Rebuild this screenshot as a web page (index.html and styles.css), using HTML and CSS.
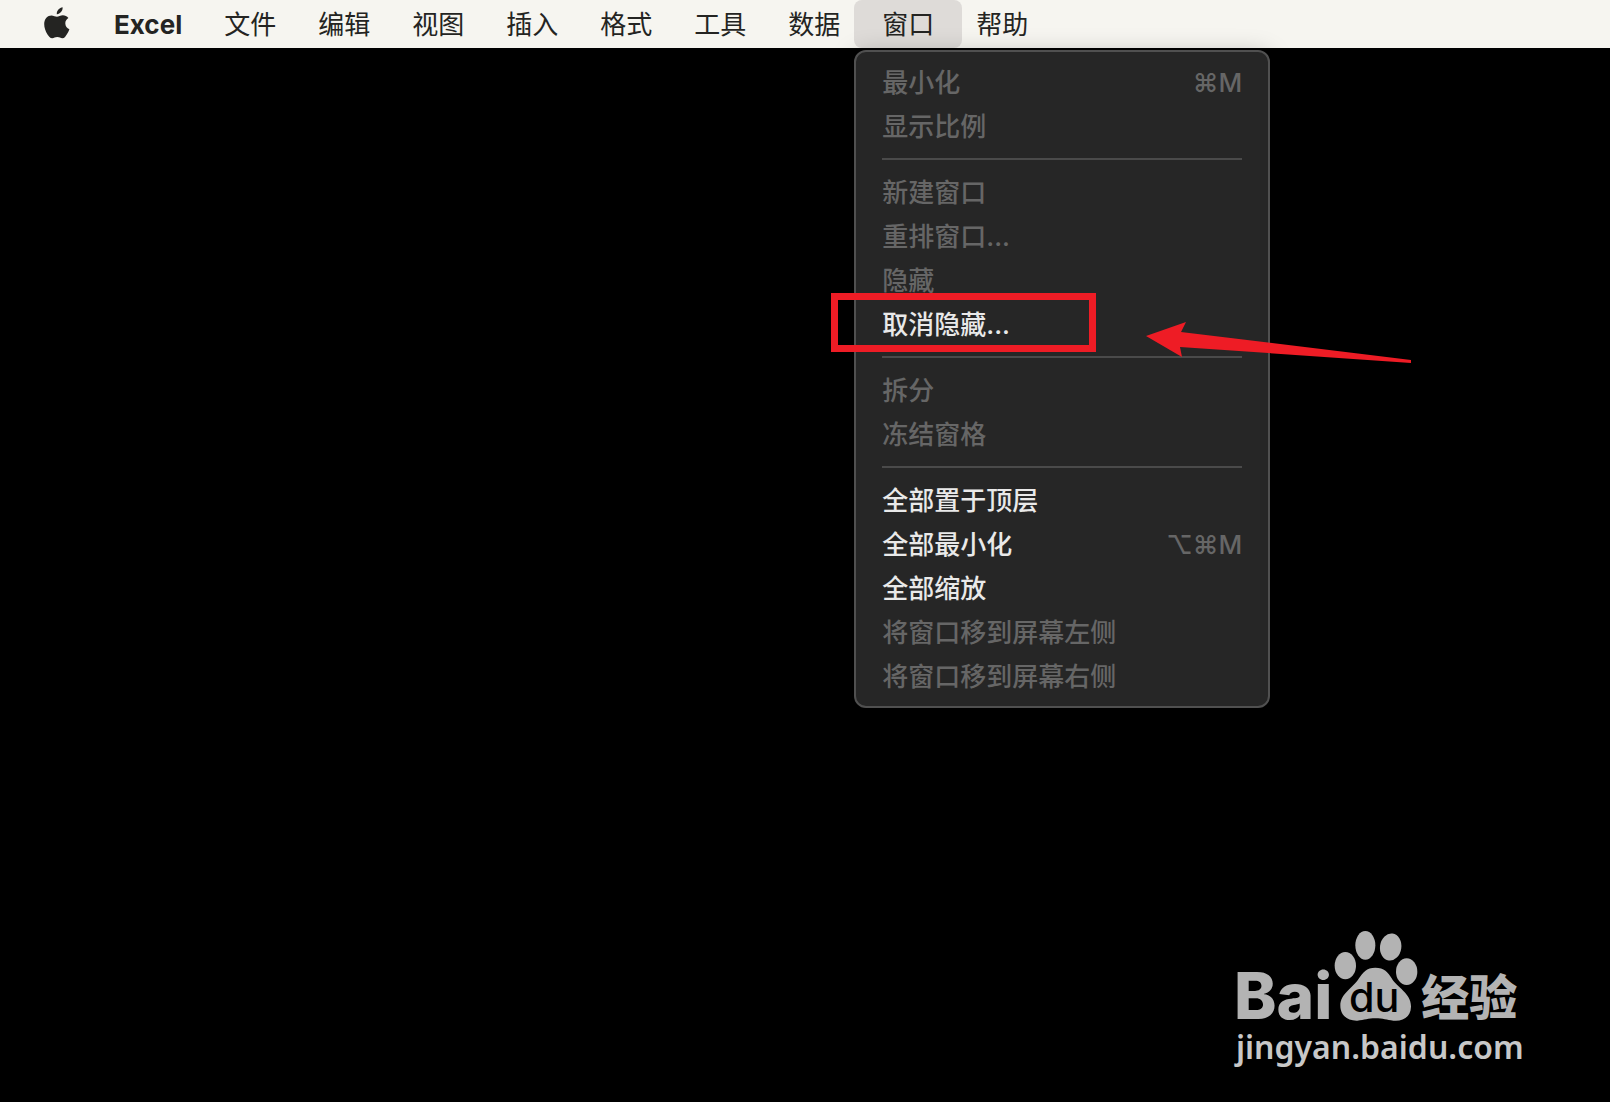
FILE: index.html
```html
<!DOCTYPE html>
<html lang="zh-CN">
<head>
    <meta charset="utf-8">
    <title>Excel</title>
    <link rel="stylesheet" href="styles.css">
</head>
<body>
    <nav class="menubar">
        <button class="bar-item apple" type="button" aria-label="Apple">
            <svg width="26" height="32" viewBox="0 0 26 32">
                <path d="M18.6 0.2C18.8 2 18.1 3.8 17 5.1C15.9 6.4 14.3 7.3 12.8 7.2C12.6 5.5 13.4 3.7 14.4 2.6C15.5 1.3 17.2 0.3 18.6 0.2Z"/>
                <path d="M24.4 11C22.6 12.1 21.3 13.9 21.3 16.3C21.3 19.1 22.9 21.3 25.4 22.2C24.9 23.9 24 25.6 22.9 27.2C21.8 28.9 20.6 31.2 18.3 31.3C16.5 31.3 15.7 30.1 13.3 30.1C10.9 30.1 10.1 31.3 8.3 31.3C6.2 31.4 4.7 29.1 3.5 27.4C1.4 24.3 0.2 20.6 0.2 17.1C0.2 11.5 3.7 8.4 7.4 8.4C9.5 8.4 11.4 9.7 13 9.7C14.4 9.7 16.6 8.3 18.9 8.3C20.9 8.3 23 9.2 24.4 11Z"/>
            </svg>
        </button>
        <button class="bar-item app-name" type="button">Excel</button>
        <button class="bar-item" type="button">文件</button>
        <button class="bar-item" type="button">编辑</button>
        <button class="bar-item" type="button">视图</button>
        <button class="bar-item" type="button">插入</button>
        <button class="bar-item" type="button">格式</button>
        <button class="bar-item" type="button">工具</button>
        <button class="bar-item" type="button">数据</button>
        <div class="bar-group">
            <button class="bar-item active" type="button" aria-expanded="true">窗口</button>
            <div class="menu">
                <button type="button" disabled>最小化<kbd>⌘M</kbd></button>
                <button type="button" disabled>显示比例</button>
                <hr>
                <button type="button" disabled>新建窗口</button>
                <button type="button" disabled>重排窗口...</button>
                <button type="button" disabled>隐藏</button>
                <button class="marked" type="button">取消隐藏...</button>
                <hr>
                <button type="button" disabled>拆分</button>
                <button type="button" disabled>冻结窗格</button>
                <hr>
                <button type="button">全部置于顶层</button>
                <button type="button">全部最小化<kbd>⌥⌘M</kbd></button>
                <button type="button">全部缩放</button>
                <button type="button" disabled>将窗口移到屏幕左侧</button>
                <button type="button" disabled>将窗口移到屏幕右侧</button>
                <!-- 红色箭头 -->
                <svg class="arrow" width="266" height="42" viewBox="0 0 266 42">
                    <path d="M0 14L40 0L35 10L265 38V41L34 25L36 35Z"/>
                </svg>
            </div>
        </div>
        <button class="bar-item" type="button">帮助</button>
    </nav>

    <footer class="watermark">
        <svg class="logo" width="288" height="94" viewBox="48 60 864 282">
            <ellipse cx="376" cy="167" rx="32" ry="41"/>
            <ellipse cx="436" cy="106" rx="30" ry="43"/>
            <ellipse cx="512" cy="111" rx="32" ry="41" transform="rotate(8 512 111)"/>
            <ellipse cx="560" cy="185" rx="32" ry="40"/>
            <path d="M466 173C492 173 505 187 515 205C530 232 574 250 573 290C572 322 548 335 520 332C500 330 490 325 466 325C444 325 434 330 412 332C382 333 361 315 361 287C361 252 397 235 415 208C428 187 440 173 466 173Z"/>
            <text class="logo-bai" x="42" y="327">Bai</text>
            <text class="logo-du" x="387" y="307">du</text>
            <text class="logo-cn" x="604" y="316">经验</text>
        </svg>
        <span class="site">jingyan.baidu.com</span>
    </footer>
</body>
</html>
```
FILE: styles.css
```css
body {
    margin: 0;
    min-height: 100vh;
    background-color: #000;
    font-family: Inter, "Noto Sans CJK SC", sans-serif;
    font-size: 26px;
}

button {
    border: none;
    background: none;
    font: inherit;
    color: inherit;
}

/* ================= 顶部菜单栏 ================= */
.menubar {
    display: flex;
    height: 48px;
    padding-left: 23px;
    background-color: #f6f5f0;
    color: #242422;
}

.bar-item {
    height: 48px;
    padding: 1px 21px 0;
    line-height: 48px;
    white-space: nowrap;
}

.apple {
    display: flex;
    align-items: center;
    padding-right: 23px;
}

.apple svg {
    margin-bottom: 4px;
    fill: #242422;
}

.app-name {
    font-weight: 700;
}

.bar-group {
    position: relative;
    margin: 0 -7px;
}

.bar-item.active {
    padding: 1px 28px 0;
    border-radius: 8px;
    background-color: #dedbd8;
}

/* ================= 下拉菜单 ================= */
.menu {
    position: absolute;
    top: 50px;
    left: 0;
    box-sizing: border-box;
    width: 416px;
    padding: 8px 0;
    border: 2px solid #505050;
    border-radius: 12px;
    background-color: #262626;
    box-shadow: 0 4px 24px rgba(0, 0, 0, 0.25);
    color: #e9e9e9;
    font-weight: 500;
}

.menu button {
    display: flex;
    justify-content: space-between;
    align-items: center;
    width: 100%;
    height: 44px;
    padding: 2px 26px 0;
    line-height: 42px;
    text-align: left;
}

.menu button:disabled,
.menu kbd {
    color: #666;
}

.menu kbd {
    font: inherit;
}

.menu hr {
    height: 2px;
    margin: 10px 26px;
    border: none;
    background-color: #4a4a4a;
}

/* 红框标注 */
.marked {
    position: relative;
}

.marked::after {
    content: "";
    position: absolute;
    top: -9px;
    left: -25px;
    width: 251px;
    height: 45px;
    border: 7px solid #ee1c25;
}

.arrow {
    position: absolute;
    top: 270px;
    left: 290px;
    fill: #ee1c25;
}

/* ================= 水印 ================= */
.watermark {
    position: absolute;
    right: 86px;
    bottom: 32px;
    display: flex;
    flex-direction: column;
    width: 288px;
}

.logo {
    overflow: visible;
    fill: #b3b3b3;
}

.logo-bai {
    font-size: 192px;
    font-weight: 800;
}

.logo-du {
    fill: #000;
    font-size: 124px;
    font-weight: 500;
}

.logo-cn {
    font-family: "Noto Sans CJK SC", sans-serif;
    font-size: 144px;
    font-weight: 900;
}

.site {
    color: #c8c8c8;
    font-family: "Noto Sans", sans-serif;
    font-size: 32px;
    font-weight: 600;
    line-height: 46px;
}
```
